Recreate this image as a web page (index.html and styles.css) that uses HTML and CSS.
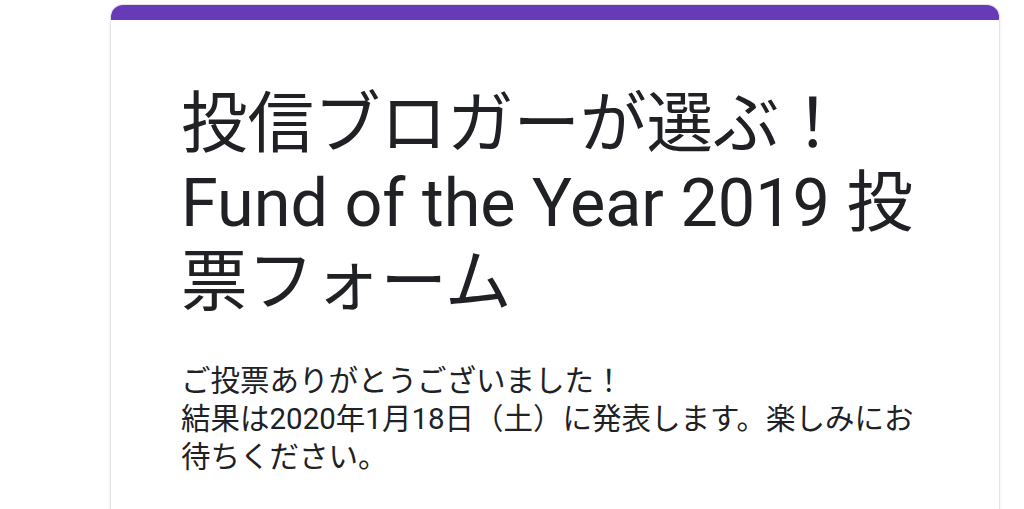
FILE: index.html
```html
<!DOCTYPE html>
<html lang="ja">
<head>
<meta charset="utf-8">
<link rel="stylesheet" href="styles.css">
</head>
<body>
<div class="page">
  <div class="card">
    <div class="bar"></div>
    <div class="content">
      <h1 class="title">投信ブロガーが選ぶ！Fund of the Year 2019 投票フォーム</h1>
      <p class="msg">ご投票ありがとうございました！<br>結果は2020年1月18日（土）に発表します。楽しみにお待ちください。</p>
    </div>
  </div>
</div>
</body>
</html>
```
FILE: styles.css
```css
html, body {
  margin: 0;
  padding: 0;
  background: #ffffff;
  overflow: hidden;
}
.page {
  padding: 5px 0 0 111px;
  height: 504px;
  overflow: hidden;
}
.card {
  width: 888px;
  background: #ffffff;
  border-radius: 12px 12px 0 0;
  box-shadow: 0 0 0 1px #e4e4e4, 0 1px 4px rgba(0,0,0,0.12);
  overflow: hidden;
  height: 600px;
}
.bar {
  height: 15px;
  background: #673ab7;
}
.content {
  padding: 65px 70px 0 70px;
}
.title {
  margin: 0;
  font-family: "Roboto", "Noto Sans CJK JP", sans-serif;
  font-weight: 400;
  font-size: 66.5px;
  line-height: 79px;
  color: #202124;
}
.msg {
  margin: 40px 0 0 0;
  font-family: "Roboto", "Noto Sans CJK JP", sans-serif;
  font-size: 29.5px;
  line-height: 38px;
  color: #202124;
}
```
